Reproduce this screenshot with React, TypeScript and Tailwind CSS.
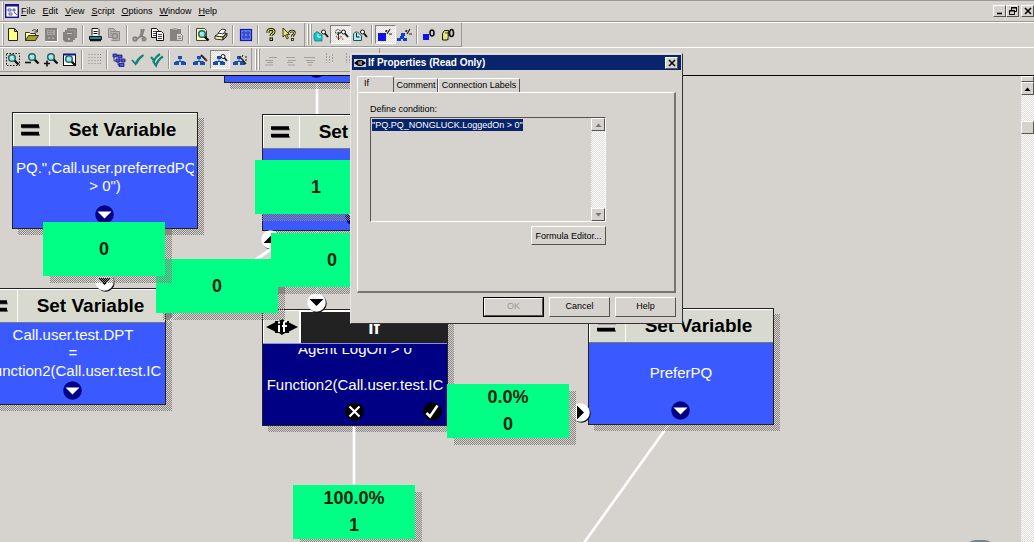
import { useEffect, useRef } from "react";
import type { ReactNode } from "react";

const RAISED = "border border-t-white border-l-white border-b-[#55534f] border-r-[#55534f]";
const DITHER_DARK =
  "bg-[conic-gradient(#8a8583_25%,transparent_0_50%,#8a8583_0_75%,transparent_0)] bg-[length:2px_2px]";
const DITHER_LIGHT =
  "bg-[conic-gradient(#ffffff_25%,#dedbd7_0_50%,#ffffff_0_75%,#dedbd7_0)] bg-[length:2px_2px]";

function Icon({ children }: { children: ReactNode }) {
  return (
    <svg viewBox="0 0 16 16" className="size-4 shrink-0" aria-hidden="true">
      {children}
    </svg>
  );
}

const Lens = ({ x, y }: { x: number; y: number }) => (
  <g>
    <path d={`M${x + 2} ${y + 2}l4.500 4.500`} stroke="#111" strokeWidth="2.400" />
    <circle cx={x} cy={y} r="3.300" fill="#9fe4e0" stroke="#1c6868" strokeWidth="1.500" />
    <path d={`M${x - 1.5} ${y}l1.500-1.500`} stroke="#fff" />
  </g>
);

const Tree = () => (
  <g fill="#1450b4">
    <rect x="5" y="4" width="4" height="3" />
    <path d="M6.500 7h1v2h4v2h-1v-1h-7v1h-1v-2h4z" />
    <rect x="1" y="10" width="5" height="3" />
    <rect x="8" y="10" width="5" height="3" />
  </g>
);

const SmallLens = () => (
  <g fill="none" stroke="#111">
    <circle cx="10.500" cy="5" r="2" fill="#fff" />
    <path d="M12 6.500l3 3.500" strokeWidth="1.800" />
  </g>
);

const Wand = () => (
  <g stroke="#222">
    <path d="M9 6l5 6" strokeWidth="1.500" />
    <path d="M8 4v2M11 3l-1 2M13 5h2M13 8h2" />
  </g>
);

const Sheet = ({ x, y, gray = false }: { x: number; y: number; gray?: boolean }) => (
  <g>
    <path
      d={`M${x} ${y}h5l2 2v7h-7z`}
      fill={gray ? "#b5b3af" : "#fff"}
      stroke={gray ? "#8d8b87" : "#111"}
    />
    <path
      d={`M${x + 1.5} ${y + 3}h4M${x + 1.5} ${y + 5}h4M${x + 1.5} ${y + 7}h4`}
      stroke={gray ? "#8d8b87" : "#111"}
      strokeWidth="0.800"
    />
  </g>
);

const icons: Record<string, ReactNode> = {
  blank: <path d="M3.500 1.500h6l3 3v9h-9z M9.500 1.500v3h3" fill="#ffff84" stroke="#222" />,
  open: (
    <g stroke="#222" strokeWidth="0.900">
      <path d="M1.500 13.500v-8h4l1 1h5v3" fill="#ffffa0" />
      <path d="M1.500 13.500l3-5h10l-3 5z" fill="#a3a32c" />
      <path d="M8 4q3-3 5 0.500M13.500 2v3h-3" fill="none" />
    </g>
  ),
  save: (
    <g>
      <rect x="2" y="1" width="12" height="13" fill="#858380" />
      <rect x="4" y="3" width="8" height="5" fill="#a9a7a3" />
      <path d="M5 4.500h6M5 6.500h6" stroke="#858380" strokeDasharray="2 1" />
      <path d="M5 11h2M9 11h2" stroke="#c6c3be" />
      <path d="M14.500 2v12.500h-12" stroke="#fff" fill="none" />
    </g>
  ),
  saveAll: (
    <g fill="#858380">
      <path d="M5 1h9l1 1v9h-2v2h-2v2h-8l-2-2v-8h2v-2h2z" />
      <path d="M5 6h5v1h-5zM6 11h2v2h-2z" fill="#c6c3be" />
      <path d="M7 3.500h6v6" stroke="#9a9894" fill="none" />
    </g>
  ),
  print: (
    <g stroke="#111">
      <path d="M5 8.500v-7h6l1 1v6" fill="#fff" />
      <path d="M6.500 4.500h4M6.500 6.500h4" />
      <path d="M2.500 9.500h12v3h-12z" fill="#149090" />
      <path d="M3 13.500h11" strokeWidth="1.500" />
    </g>
  ),
  preview: (
    <g>
      <Sheet x={2.5} y={1.5} gray />
      <path d="M6.500 4.500h7v9h-8" fill="#b5b3af" stroke="#8d8b87" />
      <circle cx="9" cy="9" r="2.500" fill="none" stroke="#8d8b87" strokeWidth="1.500" />
    </g>
  ),
  cut: (
    <g stroke="#858380" fill="none" strokeWidth="2">
      <path d="M13 2l-2 6-5 4M9 7l4 4M10.500 2v8" />
      <circle cx="4" cy="12" r="1.700" />
      <circle cx="13" cy="12" r="1.500" />
    </g>
  ),
  copy: (
    <g>
      <Sheet x={1.5} y={1.5} />
      <Sheet x={6.5} y={4.5} />
    </g>
  ),
  paste: (
    <g>
      <path d="M1 2h11v12h-11z" fill="#858380" />
      <path d="M4 1h4v2h-4z" fill="#aaa8a4" />
      <path d="M7.500 6.500h4l2 2v5h-6z" fill="#d6d3ce" stroke="#858380" />
      <path d="M9 9.500h3M9 11.500h3" stroke="#858380" />
    </g>
  ),
  find: (
    <g>
      <path d="M2.500 1.500h8l2 2v10h-10z" fill="#ffffb0" stroke="#444" />
      <Lens x={8} y={7} />
    </g>
  ),
  printKey: (
    <g stroke="#222" strokeWidth="0.900">
      <path d="M2 9l4-3h7l-3 4z" fill="#fff" />
      <path d="M5 6l4-4 4 1-3 4z" fill="#fffff0" />
      <path d="M2 9v3l8 1v-3z" fill="#fbf3a0" />
      <path d="M10 10l4-4v3l-4 4z" fill="#8f8f50" />
    </g>
  ),
  board: (
    <g>
      <rect x="2.500" y="2.500" width="11" height="11" fill="#5c84e8" stroke="#1414b4" strokeWidth="1.200" />
      <path
        d="M5 5h2v2h-2zM9 5h2v2h-2zM5 9h2v2h-2zM9 9h2v2h-2z"
        fill="#9cc4ff"
        stroke="#1414b4"
        strokeWidth="0.900"
      />
    </g>
  ),
  help: (
    <g fill="none">
      <path d="M5 6V4.500q0-2 3-2t3 2q0 1.500-1.500 2.300t-1.500 2.200" stroke="#111" strokeWidth="3" />
      <path d="M5 6V4.500q0-2 3-2t3 2q0 1.500-1.500 2.300t-1.500 2.200" stroke="#e8e850" strokeWidth="1.200" />
      <rect x="7" y="11" width="2.500" height="2.500" fill="#e8e850" stroke="#111" />
    </g>
  ),
  pointHelp: (
    <g>
      <path d="M2 1v9l2-2 2 4 1.500-1-2-3.500h3z" fill="#e8e850" stroke="#111" strokeWidth="0.800" />
      <path d="M8.500 6q0-2 2.500-2t2.500 2q0 1.500-2 2.500v1.500" fill="none" stroke="#111" strokeWidth="2.400" />
      <path d="M8.500 6q0-2 2.500-2t2.500 2q0 1.500-2 2.500v1.500" fill="none" stroke="#e8e850" />
      <rect x="10.500" y="11.500" width="2" height="2" fill="#e8e850" stroke="#111" strokeWidth="0.800" />
    </g>
  ),
  clockFull: (
    <g>
      <path d="M1 7l3-2.500 5 3.500v6h-7l-1-2z" fill="#16c4c8" stroke="#0e7c86" strokeWidth="0.800" />
      <path d="M5 7v3h3" stroke="#fff" fill="none" />
      <SmallLens />
    </g>
  ),
  clockFace: (
    <g>
      <circle cx="5" cy="5" r="2.500" fill="#e8e4e0" stroke="#222" strokeDasharray="2 1" />
      <path d="M3 9l3 4 2-4 2 4" stroke="#c03030" strokeDasharray="2 1" fill="none" />
      <path d="M4 6h3M5.500 5v8" stroke="#333" />
      <SmallLens />
    </g>
  ),
  clockEmpty: (
    <g>
      <path d="M1.500 7l2-2h2l4 4v4.500h-8z" fill="#b8ecec" stroke="#0e5c66" />
      <path d="M4.500 6v4h3" stroke="#111" fill="none" />
      <SmallLens />
    </g>
  ),
  boxPercent: (
    <g>
      <rect x="1" y="6" width="8" height="8" fill="#1010e8" />
      <path d="M9 5l1-2M10 7l3-5M12 7h3M8 4h1" stroke="#222" strokeWidth="1.200" />
    </g>
  ),
  treePercent: (
    <g>
      <path d="M4 6h4v3h-1v2h3v3h-4v-2h-2v2h-4v-3h3v-2h1z" fill="#1040d0" />
      <path d="M9 5l1-2M10 7l3-5M12 7h3M8 4h1" stroke="#222" strokeWidth="1.200" />
    </g>
  ),
  boxZero: (
    <g>
      <rect x="2" y="7" width="6" height="6" fill="#1010e8" />
      <ellipse cx="11" cy="6" rx="2" ry="3" fill="none" stroke="#111" strokeWidth="1.600" />
    </g>
  ),
  pageZero: (
    <g>
      <path d="M2.500 6.500l2-3h4l-1 9.500h-5z" fill="#e8e850" stroke="#111" />
      <path d="M5 6h3v7" fill="#fffff0" stroke="#111" strokeWidth="0.800" />
      <ellipse cx="11.500" cy="6" rx="2" ry="3.500" fill="none" stroke="#111" strokeWidth="1.600" />
    </g>
  ),
  zoomArea: (
    <g>
      <rect x="1.500" y="1.500" width="13" height="12" fill="none" stroke="#111" strokeDasharray="1.500 1.500" />
      <Lens x={7} y={6} />
    </g>
  ),
  zoomOut: (
    <g>
      <Lens x={8} y={5} />
      <path d="M1 10.500h6" stroke="#111" strokeWidth="1.600" />
    </g>
  ),
  zoomIn: (
    <g>
      <Lens x={8} y={5} />
      <path d="M1 11.500h6M4 8.500v6" stroke="#111" strokeWidth="1.600" />
    </g>
  ),
  zoomPage: (
    <g>
      <rect x="1.500" y="2.500" width="12" height="11" fill="#fff" stroke="#111" />
      <path d="M1 2.500h13" stroke="#14148c" strokeWidth="2" />
      <Lens x={7} y={7} />
    </g>
  ),
  grid: (
    <path
      d="M3 2v12M6 2v12M9 2v12M12 2v12M14.500 2v12"
      stroke="#858380"
      strokeWidth="1"
      strokeDasharray="1 2"
    />
  ),
  cascade: (
    <g fill="#4a5ae0" stroke="#14147c" strokeWidth="0.800">
      <path d="M2 2h4v3h-4zM7 3h4v3h-4zM5 7h4v3h-4zM10 7h4v3h-4zM8 11.500h5v3h-5z" />
      <path d="M3 5v4h2M6 3.500h2M7 10v3h2" fill="none" />
    </g>
  ),
  check: <path d="M2 8l3.500 4q2-6 8-9-5 4-7.500 9" fill="#108478" stroke="#108478" strokeWidth="1.800" />,
  checkTwice: (
    <g fill="none" stroke="#108478" strokeWidth="2.200">
      <path d="M2 5l3 3.500q2-4 6-6.500" />
      <path d="M4 9l3 4.500q2-6 7-9" />
    </g>
  ),
  tree: <Tree />,
  treePen: (
    <g>
      <Tree />
      <path d="M9 3l5 5" stroke="#222" strokeWidth="1.800" />
      <path d="M13 7l2 2" stroke="#a02020" strokeWidth="2" />
    </g>
  ),
  treeLens: (
    <g>
      <Tree />
      <circle cx="11" cy="4.500" r="2" fill="#fff" stroke="#111" />
      <path d="M12.500 6l2.500 3" stroke="#111" strokeWidth="1.600" />
    </g>
  ),
  treeWand: (
    <g>
      <Tree />
      <Wand />
    </g>
  ),
  alignA: <path d="M6 5.500h8M2 8.500h8M4 10.500h6M2 13h8" stroke="#a3a19d" strokeWidth="1" />,
  alignB: <path d="M3 5.500h9M5 8.500h8M4 10.500h6M5 13h7" stroke="#a3a19d" strokeWidth="1" />,
  alignC: <path d="M2 5.500h11M4 8.500h9M5 10.500h6M6 13h4" stroke="#a3a19d" strokeWidth="1" />,
  alignD: <path d="M4.500 1v10M7.500 4v7M10.500 2v8" stroke="#a3a19d" strokeWidth="1" strokeDasharray="2 1" />,
};

function Tool({ icon, label, pressed = false }: { icon: string; label: string; pressed?: boolean }) {
  return (
    <button
      type="button"
      aria-label={label}
      className={`flex h-[19px] min-w-0 flex-1 items-center justify-center ${
        pressed ? `border border-t-[#858380] border-l-[#858380] border-r-white border-b-white ${DITHER_LIGHT}` : ""
      }`}
    >
      <Icon>{icons[icon]}</Icon>
    </button>
  );
}

const Divider = () => (
  <span className="flex w-[6px] shrink-0 justify-center">
    <span className="h-[19px] w-[2px] border-l border-[#9a9894] border-r border-r-white" />
  </span>
);

const Grip = () => (
  <span className="flex shrink-0 gap-px">
    <span className="h-[21px] w-[2px] border-l border-l-white border-r border-r-[#9a9894]" />
    <span className="h-[21px] w-[2px] border-l border-l-white border-r border-r-[#9a9894]" />
  </span>
);

const menus = ["File", "Edit", "View", "Script", "Options", "Window", "Help"];

function WindowButton({ label, children }: { label: string; children: ReactNode }) {
  return (
    <button type="button" aria-label={label} className={`flex h-3 w-[13px] items-center justify-center ${RAISED}`}>
      <svg viewBox="0 0 10 10" className="size-[10px] shrink-0" fill="none" stroke="#000">
        {children}
      </svg>
    </button>
  );
}

function Header() {
  return (
    <header>
      <div className="flex h-[22px] items-center justify-between border-t border-b border-[#9a9894] pl-[2px]">
        <div className="flex items-center">
          <span className="h-[18px] w-[2px] border-l border-l-white border-r border-r-[#9a9894]" />
          <svg viewBox="0 0 14 14" className="ml-px size-[14px]" aria-hidden="true">
            <rect x="0.700" y="0.700" width="12.600" height="12.600" fill="#fff" stroke="#14148c" strokeWidth="1.400" />
            <path d="M0 1.500h14" stroke="#14148c" strokeWidth="2" />
            <path d="M3 5h3v2h-3zM8 5h2v2h-2zM4 9h3v2h-3zM9 8l3 3" stroke="#4444b4" fill="none" strokeWidth="0.900" />
          </svg>
          <nav className="ml-[2px] flex gap-[7px]">
            {menus.map((m) => (
              <button key={m} type="button" className="leading-4">
                <span className="underline underline-offset-1">{m[0]}</span>
                {m.slice(1)}
              </button>
            ))}
          </nav>
        </div>
        <div className="flex">
          <WindowButton label="Minimize">
            <path d="M2 7.500h5" strokeWidth="1.600" />
          </WindowButton>
          <WindowButton label="Restore">
            <path d="M3.500 4v-2.500h5v4h-2M3 2h6M1.500 4.500h5v4h-5zM1 5h6" />
          </WindowButton>
          <span className="w-[2px]" />
          <WindowButton label="Close">
            <path d="M2 2l6 6M8 2l-6 6" strokeWidth="1.600" />
          </WindowButton>
        </div>
      </div>

      <div className="flex h-[25px] border-t border-white">
        <div className="flex items-center border-r border-b border-[#9a9894] pr-1 pl-[2px]">
          <span className="h-[21px] w-[2px] border-l border-l-white border-r border-r-[#9a9894]" />
          <div className="flex w-[295px] items-center">
            <Tool icon="blank" label="New" />
            <Tool icon="open" label="Open" />
            <Tool icon="save" label="Save" />
            <Tool icon="saveAll" label="Save all" />
            <Divider />
            <Tool icon="print" label="Print" />
            <Tool icon="preview" label="Print preview" />
            <Divider />
            <Tool icon="cut" label="Cut" />
            <Tool icon="copy" label="Copy" />
            <Tool icon="paste" label="Paste" />
            <Divider />
            <Tool icon="find" label="Find" />
            <Tool icon="printKey" label="Properties" />
            <Divider />
            <Tool icon="board" label="Palette" />
            <Divider />
            <Tool icon="help" label="Help" />
            <Tool icon="pointHelp" label="Context help" />
          </div>
          <span className="ml-[5px] h-full border-l border-[#9a9894] pr-[2px]" />
          <Grip />
          <div className="flex w-[145px] items-center">
            <Tool icon="clockFull" label="Monitor" />
            <Tool icon="clockFace" label="Monitor script" pressed />
            <Tool icon="clockEmpty" label="Monitor interval" />
            <Divider />
            <Tool icon="boxPercent" label="Node percentages" pressed />
            <Tool icon="treePercent" label="Route percentages" />
            <Divider />
            <Tool icon="boxZero" label="Node counts" />
            <Tool icon="pageZero" label="Page counts" />
          </div>
        </div>
      </div>

      <div className="flex h-[25px] border-t border-white">
        <div className="flex items-center border-r border-b border-[#9a9894] pr-[2px] pl-[2px]">
          <span className="h-[21px] w-[2px] border-l border-l-white border-r border-r-[#9a9894]" />
          <div className="flex w-[245px] items-center">
            <Tool icon="zoomArea" label="Zoom area" />
            <Tool icon="zoomOut" label="Zoom out" />
            <Tool icon="zoomIn" label="Zoom in" />
            <Tool icon="zoomPage" label="Zoom page" />
            <Divider />
            <Tool icon="grid" label="Grid" />
            <Divider />
            <Tool icon="cascade" label="Arrange" />
            <Tool icon="check" label="Validate" />
            <Tool icon="checkTwice" label="Validate all" />
            <Divider />
            <Tool icon="tree" label="Script tree" />
            <Tool icon="treePen" label="Edit mode" />
            <Tool icon="treeLens" label="Monitor mode" pressed />
            <Tool icon="treeWand" label="Quick edit mode" />
          </div>
        </div>
        <div className="flex items-center border-r border-b border-[#9a9894] pl-[3px]">
          <Grip />
          <div className="ml-px flex w-[118px] items-center">
            <Tool icon="alignA" label="Align left" />
            <Tool icon="alignB" label="Align center" />
            <Tool icon="alignC" label="Align right" />
            <Tool icon="alignD" label="Align top" />
            <Tool icon="alignD" label="Align middle" />
            <Tool icon="alignD" label="Align bottom" />
          </div>
        </div>
      </div>
      <div className="h-1 border-b border-black" />
    </header>
  );
}

const Terminal = ({ children, className }: { children: ReactNode; className: string }) => (
  <svg viewBox="0 0 19 19" className={`absolute size-[19px] ${className}`} aria-hidden="true">
    {children}
  </svg>
);

const OutDown = ({ className }: { className: string }) => (
  <Terminal className={className}>
    <circle cx="9.500" cy="9.500" r="9.300" fill="#000084" />
    <path d="M2.500 6.500h14l-7 7z" fill="#fff" />
  </Terminal>
);

function Inlet({ className, d }: { className: string; d: string }) {
  return (
    <svg viewBox="0 0 20 20" className={`absolute size-5 ${className}`} aria-hidden="true">
      <circle cx="10.500" cy="10.500" r="9.200" fill="#111" />
      <circle cx="9.500" cy="9.500" r="9.300" fill="#fff" />
      <path d={d} fill="#000" />
    </svg>
  );
}

const DOWN = "M2.500 6h14l-7 7z";
const UP = "M2.500 13h14l-7-7z";
const RIGHT = "M6 2.500v14l7-7z";

interface SetNodeProps {
  className: string;
  title?: string;
  lines?: string[];
  start?: boolean;
}

function SetNode({ className, title = "Set Variable", lines = [], start = false }: SetNodeProps) {
  return (
    <section className={`absolute h-[117px] w-[186px] ${className}`}>
      <div className={`absolute top-[6px] left-[6px] size-full ${DITHER_DARK}`} />
      <div className="relative flex h-full flex-col border border-[#222] bg-[#3a5aff]">
        <div className="flex h-[34px] shrink-0 border-b border-[#77777f] bg-[#d8dad0]">
          <div className="flex w-9 items-center justify-center border-t border-l border-white pr-1">
            <svg viewBox="0 0 20 12" className="h-3 w-5" aria-hidden="true">
              <path d="M2 3.500h18M2 11h18" stroke="#777" strokeWidth="2" />
              <path d="M1 2h18M1 9.500h18" stroke="#000" strokeWidth="3.400" />
            </svg>
          </div>
          <h2 className="flex-1 border-t border-l border-white pr-[2px] text-center text-[19px] leading-8 font-bold">
            {title}
          </h2>
        </div>
        <div className="mx-[3px] flex h-[60px] flex-col items-center justify-center overflow-hidden text-[15px] leading-[18px] whitespace-nowrap text-white">
          {lines.map((l, i) => (
            <p key={l} className={start && i === 0 ? "self-start" : ""}>
              {l}
            </p>
          ))}
        </div>
        <OutDown className="bottom-1 left-[82px]" />
      </div>
    </section>
  );
}

function IfNode() {
  return (
    <section className="absolute top-[233px] left-[262px] h-[117px] w-[186px]">
      <div className={`absolute top-[6px] left-[6px] size-full ${DITHER_DARK}`} />
      <div className="relative flex h-full flex-col border border-[#222] bg-[#000084]">
        <div className="flex h-[34px] shrink-0 border-b border-[#8c8cf0] bg-[#d8dad0]">
          <div className="flex w-9 items-center justify-center border-t border-l border-white">
            <svg viewBox="0 0 32 18" className="h-[18px] w-8" aria-hidden="true">
              <path d="M0 9l9-4.500v-1.500h4l3-2 3 2h4v1.500l9 4.500-9 4.500v1.500h-4l-3 2-3-2h-4v-1.500z" fill="#000" />
              <path d="M13 7v7M18 14v-9q0-2 3-1.500M16 8h5M13 3.500v2" stroke="#fff" strokeWidth="2" fill="none" />
            </svg>
          </div>
          <h2 className="flex-1 border-2 border-r-0 border-b-0 border-white bg-[#222] text-center text-[19px] leading-8 font-bold text-white">
            If
          </h2>
        </div>
        <div className="mx-[3px] mt-1 flex h-14 flex-col items-center justify-center overflow-hidden text-[15px] leading-[18px] whitespace-nowrap text-white">
          <p>Agent LogOn &gt; 0</p>
          <p className="h-[18px] shrink-0" />
          <p>Function2(Call.user.test.IC</p>
          <p className="h-[18px] shrink-0" />
        </div>
        <Terminal className="bottom-1 left-[82px]">
          <circle cx="9.500" cy="9.500" r="9.300" fill="#000" />
          <path d="M4.500 4.500l10 10M14.500 4.500l-10 10" stroke="#fff" strokeWidth="2.200" />
        </Terminal>
        <Terminal className="right-[5px] bottom-1">
          <circle cx="9.500" cy="9.500" r="9.300" fill="#000" />
          <path d="M3.500 11l3.500 3.500 7.500-11" stroke="#fff" strokeWidth="2.600" fill="none" />
        </Terminal>
      </div>
    </section>
  );
}

function Stat({ className, values }: { className: string; values: string[] }) {
  return (
    <div className={`absolute h-[54px] w-[122px] ${className}`}>
      <div className={`absolute top-[7px] left-[7px] size-full ${DITHER_DARK}`} />
      <div className="relative flex h-full flex-col justify-center bg-[#00ff84] text-center text-[18px] leading-[27px] font-bold text-[#0c2410]">
        {values.map((v) => (
          <p key={v}>{v}</p>
        ))}
      </div>
    </div>
  );
}

function Canvas() {
  return (
    <main className="relative min-w-0 flex-1 overflow-hidden">
      <svg className="absolute inset-0 size-full" aria-hidden="true">
        <g stroke="#fff" strokeWidth="2.600">
          <path d="M317 0v230M354 340v140M354 460v40M672 344l-96 134M273 172l-105 74" />
        </g>
      </svg>
      <SetNode className="-top-[110px] left-[224px]" title="" />
      <SetNode
        className="top-9 left-3"
        lines={['PQ.",Call.user.preferredPQ', '> 0")']}
        start
      />
      <SetNode className="top-[38px] left-[262px]" />
      <SetNode
        className="top-[212px] -left-[20px]"
        lines={["Call.user.test.DPT", "=", "Function2(Call.user.test.IC"]}
      />
      <IfNode />
      <SetNode className="top-[232px] left-[588px]" lines={["PreferPQ"]} />

      <svg viewBox="0 0 320 400" className="absolute top-0 left-[350px] h-[400px] w-[320px]" aria-hidden="true">
        <path d="M4 351v7" stroke="#fff" strokeWidth="2.600" />
      </svg>

      <Inlet className="top-[217px] left-[307px]" d={DOWN} />
      <Inlet className="top-[196px] left-[95px]" d={DOWN} />
      <Inlet className="top-[154px] left-[261px]" d={UP} />
      <Inlet className="top-[327px] left-[571px]" d={RIGHT} />

      <svg viewBox="0 0 110 80" className="absolute top-[170px] left-[166px] h-20 w-[110px]" aria-hidden="true">
        <path d="M106 2L4 74" stroke="#fff" strokeWidth="2.600" />
      </svg>

      <Stat className="top-[84px] left-[255px]" values={["1"]} />
      <Stat className="top-[183px] left-[156px]" values={["0"]} />
      <Stat className="top-[146px] left-[43px]" values={["0"]} />
      <Stat className="top-[157px] left-[271px]" values={["0"]} />
      <Stat className="top-[308px] left-[447px]" values={["0.0%", "0"]} />
      <Stat className="top-[409px] left-[293px]" values={["100.0%", "1"]} />

      <span className="absolute -bottom-[22px] left-[964px] size-6 w-8 rounded-full bg-[#77838b]" />
    </main>
  );
}

const Arrow = ({ d, fill }: { d: string; fill: string }) => (
  <svg viewBox="0 0 7 4" className="h-1 w-[7px]" aria-hidden="true">
    <path d={d} fill={fill} />
  </svg>
);

const ARROW_UP = "M0.500 4h6l-3-3.500z";
const ARROW_DOWN = "M0.500 0h6l-3 3.500z";

function ScrollButton({ label, d, fill }: { label: string; d: string; fill: string }) {
  return (
    <button
      type="button"
      aria-label={label}
      className={`flex h-[13px] w-full shrink-0 items-center justify-center bg-[#d6d3ce] ${RAISED}`}
    >
      <Arrow d={d} fill={fill} />
    </button>
  );
}

function Dialog() {
  const field = useRef<HTMLTextAreaElement>(null);
  useEffect(() => {
    field.current?.focus();
    field.current?.select();
  }, []);

  const button = `h-5 w-[61px] ${RAISED}`;

  return (
    <div
      role="dialog"
      aria-labelledby="dialog-title"
      className="absolute top-[53px] left-[350px] flex w-[333px] flex-col border border-t-[#e8e6e2] border-r-[#333] border-b-[#333] border-l-[#e8e6e2] bg-[#d6d3ce] p-px pb-[6px]"
    >
      <div className="flex h-[15px] items-center justify-between bg-[#08246b] pr-[3px] pl-[2px] text-white">
        <div className="flex items-center gap-[2px]">
          <svg viewBox="0 0 12 8" className="h-2 w-3" aria-hidden="true">
            <rect width="12" height="8" fill="#d6d3ce" />
            <path d="M0 4l4-3h4l4 3-4 3h-4z" fill="#000" />
            <path d="M5 2.500v3M7 2v4" stroke="#fff" />
          </svg>
          <h1 id="dialog-title" className="text-[10px] leading-[15px] font-bold">
            If Properties (Read Only)
          </h1>
        </div>
        <button
          type="button"
          aria-label="Close"
          className={`flex h-3 w-[13px] items-center justify-center bg-[#d6d3ce] ${RAISED}`}
        >
          <svg viewBox="0 0 8 8" className="size-2">
            <path d="M1 1l6 6M7 1l-6 6" stroke="#000" strokeWidth="1.500" />
          </svg>
        </button>
      </div>

      <div role="tablist" className="mt-[6px] ml-[5px] flex items-end whitespace-nowrap">
        <button
          type="button"
          role="tab"
          aria-selected="true"
          className="h-4 w-[37px] rounded-t-xs border border-b-0 border-t-white border-r-[#55534f] border-l-white pb-1 pl-[6px] text-left leading-3"
        >
          If
        </button>
        <button
          type="button"
          role="tab"
          aria-selected="false"
          className="h-[14px] w-[44px] rounded-t-xs border border-b-0 border-t-white border-r-[#55534f] border-l-transparent text-center leading-[13px]"
        >
          Comment
        </button>
        <button
          type="button"
          role="tab"
          aria-selected="false"
          className="h-[14px] w-[82px] rounded-t-xs border border-b-0 border-t-white border-r-[#55534f] border-l-white text-center leading-[13px]"
        >
          Connection Labels
        </button>
      </div>

      <div
        role="tabpanel"
        className="mr-[5px] ml-[5px] flex h-[201px] flex-col border border-t-white border-r-2 border-r-[#77756f] border-b-2 border-b-[#77756f] border-l-white pt-2 pr-[68px] pl-3"
      >
        <label htmlFor="condition" className="leading-4">
          Define condition:
        </label>
        <div className="flex h-[105px] border border-t-[#55534f] border-r-white border-b-white border-l-[#55534f]">
          <textarea
            id="condition"
            ref={field}
            readOnly
            defaultValue={'"PQ.PQ_NONGLUCK.LoggedOn > 0"'}
            className="min-w-0 flex-1 resize-none overflow-hidden bg-transparent pt-px pl-px leading-3 outline-none selection:bg-[#08246b] selection:text-white"
          />
          <div className={`flex w-[14px] flex-col justify-between ${DITHER_LIGHT}`}>
            <ScrollButton label="Scroll condition up" d={ARROW_UP} fill="#777" />
            <ScrollButton label="Scroll condition down" d={ARROW_DOWN} fill="#777" />
          </div>
        </div>
        <button type="button" className={`mt-1 h-[19px] w-[75px] self-end leading-4 whitespace-nowrap ${RAISED}`}>
          Formula Editor...
        </button>
      </div>

      <div className="mt-1 mr-[5px] flex justify-end gap-[5px]">
        <button type="button" disabled className="h-5 w-[61px] border border-black p-0 text-[#9a9894]">
          <span className={`flex size-full items-center justify-center ${RAISED}`}>OK</span>
        </button>
        <button type="button" className={button}>
          Cancel
        </button>
        <button type="button" className={button}>
          Help
        </button>
      </div>
    </div>
  );
}

export default function App() {
  return (
    <div className="relative flex h-screen flex-col overflow-hidden bg-[#d6d3ce] font-['Liberation_Sans',sans-serif] text-[9px] text-black">
      <Header />
      <div className="flex min-h-0 flex-1">
        <Canvas />
        <aside className={`flex w-[13px] shrink-0 flex-col ${DITHER_LIGHT}`}>
          <span className={`h-[6px] shrink-0 bg-[#d6d3ce] ${RAISED}`} />
          <ScrollButton label="Scroll up" d={ARROW_UP} fill="#000" />
          <span className={`mt-[26px] h-[13px] shrink-0 bg-[#d6d3ce] ${RAISED}`} />
        </aside>
      </div>
      <Dialog />
    </div>
  );
}
